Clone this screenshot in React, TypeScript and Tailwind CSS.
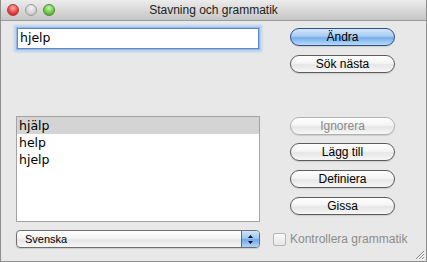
import React from 'react';

const aqua =
  'bg-[linear-gradient(to_bottom,#ffffff_0%,#f4f4f4_45%,#e6e6e6_55%,#f7f7f7_100%)]';

function Button({ label, primary, disabled, className = '' }: { label: string; primary?: boolean; disabled?: boolean; className?: string }) {
  const skin = primary
    ? 'border-[#2f4f8a] bg-[linear-gradient(to_bottom,#d3e6fa_0%,#a6cbf3_45%,#77ade9_55%,#b5dbfb_100%)] text-black'
    : disabled
      ? `border-[#b2b2b2] ${aqua} text-[#8a8a8a]`
      : `border-[#5c5c5c] ${aqua} text-black`;
  return (
    <div
      className={`w-[105px] h-[18px] rounded-full border flex items-center justify-center text-[12px] leading-none shadow-[0_1px_1px_rgba(0,0,0,0.12)] ${skin} ${className}`}
    >
      {label}
    </div>
  );
}

function Light({ color }: { color: string }) {
  return <div className={`w-[12px] h-[12px] rounded-full border ${color}`} />;
}

export default function App() {
  const words = ['hjälp', 'help', 'hjelp'];
  return (
    <div className="w-[427px] h-[262px] bg-[#e8e8e8] border border-t-0 border-[#8e8e8e] flex flex-col relative overflow-hidden font-['Liberation_Sans',Arial,sans-serif] text-black">
      {/* title bar */}
      <div className="h-[21px] shrink-0 grid grid-cols-[1fr_auto_1fr] items-center border-b border-[#9c9c9c] bg-[linear-gradient(to_bottom,#ececec,#c6c6c6)]">
        <div className="flex items-center gap-[6px] pl-[6px] pt-[0px]">
          <Light color="border-[#b23a3a] bg-[radial-gradient(circle_at_50%_30%,#ffb3b3,#e63c3c_60%,#b51c1c)]" />
          <Light color="border-[#9a9a9a] bg-[radial-gradient(circle_at_50%_30%,#f4f4f4,#d2d2d2_60%,#b8b8b8)]" />
          <Light color="border-[#4a8d2c] bg-[radial-gradient(circle_at_50%_30%,#c9f5a8,#6cc446_60%,#3e9a1e)]" />
        </div>
        <div className="text-[12px] text-[#222] leading-none">Stavning och grammatik</div>
        <div />
      </div>

      {/* body */}
      <div className="flex-1 flex flex-col pl-[13px]">
        <div className="flex">
          <div className="w-[248px] flex flex-col">
            <div className="mt-[7px] ml-[3px] w-[242px] h-[21px] bg-white border border-[#5f8ac4] shadow-[0_0_0_1px_#93b8e8,0_0_2px_3px_#b9d2f0] flex items-center pl-[2px] font-['DejaVu_Sans',sans-serif] text-[12.5px]">
              hjelp
            </div>
            <div className="mt-[67px] ml-[2px] w-[244px] h-[106px] border border-[#a3a3a3] bg-white font-['DejaVu_Sans',sans-serif] text-[12.5px]">
              {words.map((w, i) => (
                <div key={w} className={`h-[17px] leading-[17px] pl-[2px] ${i === 0 ? 'bg-[#d4d4d4]' : ''}`}>
                  {w}
                </div>
              ))}
            </div>
          </div>
          <div className="ml-[28px] flex flex-col">
            <Button label="Ändra" primary className="mt-[7px]" />
            <Button label="Sök nästa" className="mt-[9px]" />
            <Button label="Ignorera" disabled className="mt-[44px]" />
            <Button label="Lägg till" className="mt-[8px]" />
            <Button label="Definiera" className="mt-[9px]" />
            <Button label="Gissa" className="mt-[9px]" />
          </div>
        </div>

        <div className="mt-[8px] flex items-center">
          <div className={`ml-[2px] w-[244px] h-[18px] rounded-[4px] border border-[#6f6f6f] flex overflow-hidden ${aqua} shadow-[0_1px_1px_rgba(0,0,0,0.12)]`}>
            <div className="flex-1 flex items-center pl-[8px] text-[11px] leading-none">Svenska</div>
            <div className="w-[18px] border-l border-[#4a6ea8] bg-[linear-gradient(to_bottom,#cfe4fa_0%,#9cc6f2_45%,#6fa8e8_55%,#b0d7fa_100%)] flex items-center justify-center">
              <svg width="7" height="11" viewBox="0 0 7 11">
                <path d="M3.5 1 L6 4 L1 4 Z" fill="#111" />
                <path d="M3.5 10 L6 7 L1 7 Z" fill="#111" />
              </svg>
            </div>
          </div>
          <div className="ml-[13px] w-[13px] h-[13px] rounded-[2px] border border-[#b5b5b5] bg-[linear-gradient(to_bottom,#fafafa,#e6e6e6)]" />
          <div className="ml-[4px] text-[12px] text-[#8c8c8c] leading-none">Kontrollera grammatik</div>
        </div>
      </div>

      {/* resize grip */}
      <svg className="absolute right-[1px] bottom-[1px]" width="11" height="11" viewBox="0 0 11 11">
        <path d="M10 2 L2 10 M10 5 L5 10 M10 8 L8 10" stroke="#8a8a8a" strokeWidth="1" />
        <path d="M11 3 L3 11 M11 6 L6 11 M11 9 L9 11" stroke="#fafafa" strokeWidth="1" />
      </svg>
    </div>
  );
}
